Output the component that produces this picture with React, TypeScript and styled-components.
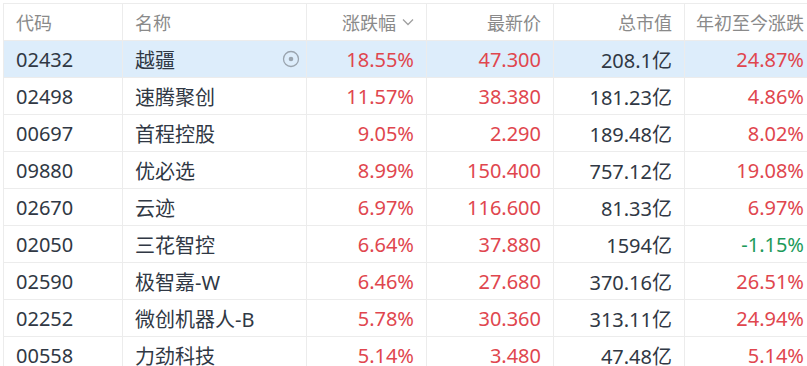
import React from 'react';
import styled, { createGlobalStyle } from 'styled-components';

const GlobalStyle = createGlobalStyle`
  html, body {
    margin: 0;
    padding: 0;
    background: #fff;
  }
  body {
    font-family: "Noto Sans", "Noto Sans CJK SC", sans-serif;
  }
`;

const Page = styled.div`
  width: 807px;
  height: 366px;
  overflow: hidden;
  padding: 3px 0 0 3px;
  box-sizing: border-box;
  background: #fff;
`;

const Table = styled.div`
  display: grid;
  grid-template-columns: 119px 184px 120px 127px 131px 132px;
  grid-auto-rows: 37px;
  width: 813px;
  border-top: 1px solid #ececec;
  border-left: 1px solid #ececec;
`;

const Row = styled.div<{ $active?: boolean }>`
  display: contents;
  & > div {
    background: ${p => (p.$active ? '#ddedfb' : '#fff')};
  }
`;

const Cell = styled.div<{ $align?: 'left' | 'right'; $tone?: 'up' | 'down' | 'plain' }>`
  box-sizing: border-box;
  display: flex;
  align-items: center;
  justify-content: ${p => (p.$align === 'right' ? 'flex-end' : 'flex-start')};
  padding: 0 12px;
  border-right: 1px solid #ececec;
  border-bottom: 1px solid #ececec;
  font-size: 20px;
  white-space: nowrap;
  color: ${p => (p.$tone === 'up' ? '#e0464e' : p.$tone === 'down' ? '#1c9a5a' : '#303844')};
`;

const HeadCell = styled(Cell)`
  font-size: 18px;
  color: #8a8a8a;
  gap: 6px;
`;

const NameCell = styled(Cell)`
  justify-content: space-between;
  padding-right: 5px;
`;

const Chevron = () => (
  <svg width="12" height="8" viewBox="0 0 12 8">
    <polyline points="1,1.5 6,6.5 11,1.5" fill="none" stroke="#a0a0a0" strokeWidth="1.3" />
  </svg>
);

const Eye = () => (
  <svg width="20" height="20" viewBox="0 0 20 20">
    <circle cx="10" cy="10" r="7.5" fill="none" stroke="#9aa4ae" strokeWidth="1.3" />
    <circle cx="10" cy="10" r="2.3" fill="#9aa4ae" />
  </svg>
);

interface Stock {
  code: string;
  name: string;
  change: string;
  price: string;
  cap: string;
  ytd: string;
}

const stocks: Stock[] = [
  { code: '02432', name: '越疆', change: '18.55%', price: '47.300', cap: '208.1亿', ytd: '24.87%' },
  { code: '02498', name: '速腾聚创', change: '11.57%', price: '38.380', cap: '181.23亿', ytd: '4.86%' },
  { code: '00697', name: '首程控股', change: '9.05%', price: '2.290', cap: '189.48亿', ytd: '8.02%' },
  { code: '09880', name: '优必选', change: '8.99%', price: '150.400', cap: '757.12亿', ytd: '19.08%' },
  { code: '02670', name: '云迹', change: '6.97%', price: '116.600', cap: '81.33亿', ytd: '6.97%' },
  { code: '02050', name: '三花智控', change: '6.64%', price: '37.880', cap: '1594亿', ytd: '-1.15%' },
  { code: '02590', name: '极智嘉-W', change: '6.46%', price: '27.680', cap: '370.16亿', ytd: '26.51%' },
  { code: '02252', name: '微创机器人-B', change: '5.78%', price: '30.360', cap: '313.11亿', ytd: '24.94%' },
  { code: '00558', name: '力劲科技', change: '5.14%', price: '3.480', cap: '47.48亿', ytd: '5.14%' },
];

const App: React.FC = () => {
  return (
    <Page>
      <GlobalStyle />
      <Table>
        <Row>
          <HeadCell>代码</HeadCell>
          <HeadCell>名称</HeadCell>
          <HeadCell $align="right">
            涨跌幅
            <Chevron />
          </HeadCell>
          <HeadCell $align="right">最新价</HeadCell>
          <HeadCell $align="right">总市值</HeadCell>
          <HeadCell $align="right">年初至今涨跌</HeadCell>
        </Row>
        {stocks.map((s, i) => (
          <Row key={s.code} $active={i === 0}>
            <Cell>{s.code}</Cell>
            <NameCell>
              <span>{s.name}</span>
              {i === 0 && <Eye />}
            </NameCell>
            <Cell $align="right" $tone="up">{s.change}</Cell>
            <Cell $align="right" $tone="up">{s.price}</Cell>
            <Cell $align="right">{s.cap}</Cell>
            <Cell $align="right" $tone={s.ytd.startsWith('-') ? 'down' : 'up'}>{s.ytd}</Cell>
          </Row>
        ))}
      </Table>
    </Page>
  );
};

export default App;
